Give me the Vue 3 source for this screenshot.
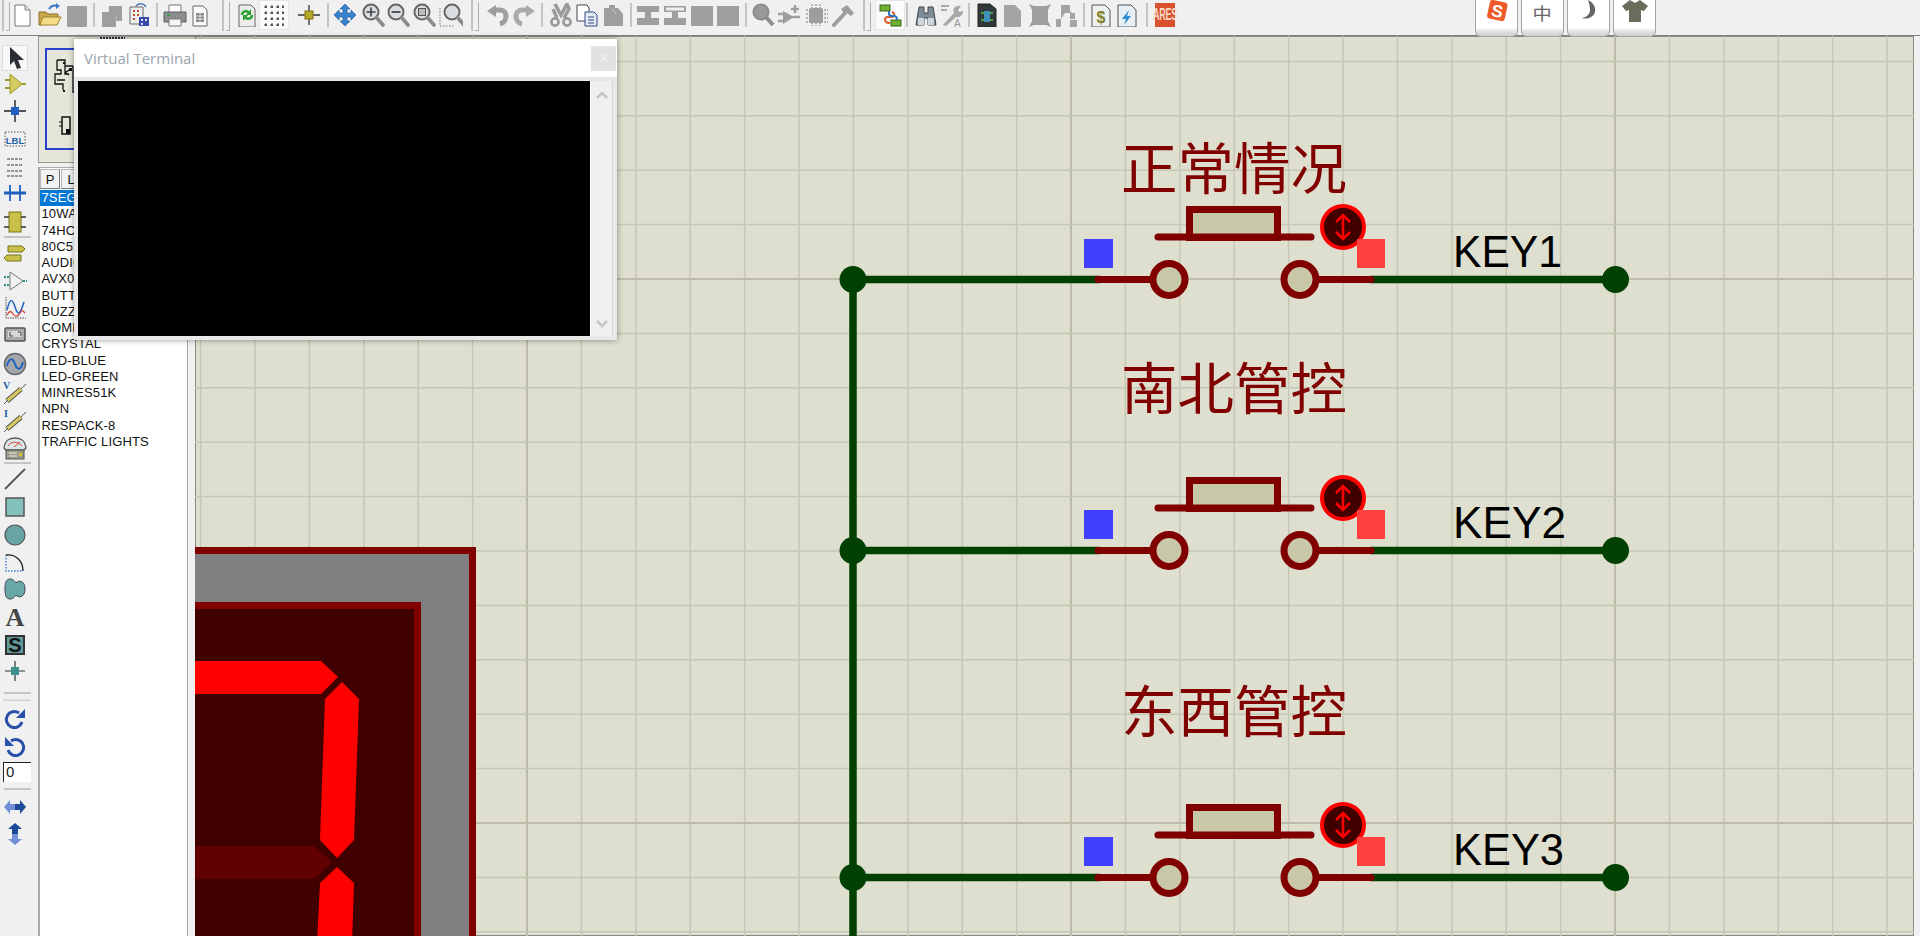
<template>
  <div class="app">
    <!-- icon sprite -->
    <svg class="sprite" aria-hidden="true">
      <defs>
        <symbol id="new" viewBox="0 0 24 24"><path d="M5 2h10l5 5v16H5z" fill="#fff" stroke="#777" /><path d="M15 2v5h5" fill="#ddd" stroke="#888" /></symbol>
        <symbol id="open" viewBox="0 0 24 24"><path d="M1 9h7l2 2h10v4H7l-3 7H1z" fill="#c8a848" stroke="#8a7030" /><path d="M5 14h18l-4 8H2z" fill="#f2dc88" stroke="#a08030" /><path d="M11 6c2-3 5-4 8-3" fill="none" stroke="#3a78c8" stroke-width="2" /><path d="M18 0l4 3-4 3z" fill="#3a78c8" /></symbol>
        <symbol id="save" viewBox="0 0 24 24"><rect x="2" y="3" width="20" height="21" rx="1" fill="#9e9e9e" /></symbol>
        <symbol id="pages" viewBox="0 0 24 24"><path d="M9 3h13v15h-6v6H2V9h7z" fill="#9e9e9e" /><path d="M9 9v-1M16 18v-5" stroke="#bbb" /></symbol>
        <symbol id="sheets" viewBox="0 0 24 24"><path d="M3 4h13v17H3z" fill="#eee" stroke="#666" /><path d="M6 8h2M10 8h2M6 12h2M10 12h2M6 16h2" stroke="#c05030" stroke-width="2" /><path d="M12 14h10v9H12z" fill="#3848a8" /><path d="M14 16h2v2h-2zM18 16h2v2h-2zM14 20h2v2h-2z" fill="#dde" /><path d="M9 3c3-3 8-3 10 1" fill="none" stroke="#4878b8" stroke-width="1.5" /></symbol>
        <symbol id="print" viewBox="0 0 24 24"><path d="M6 2h12v8H6z" fill="#fff" stroke="#777" /><path d="M1 9h22v10H1z" fill="#8c8f92" stroke="#5c5f62" /><path d="M6 16h12v7H6z" fill="#f6f6f6" stroke="#777" /><path d="M4 12h3" stroke="#38a048" stroke-width="2" /></symbol>
        <symbol id="sheet" viewBox="0 0 24 24"><path d="M5 3h10l4 4v16H5z" fill="#fafafa" stroke="#666" /><path d="M8 10h8v9H8z" fill="#888" /><path d="M8 13h8M8 16h8M12 10v9" stroke="#ddd" /></symbol>
        <symbol id="refresh" viewBox="0 0 24 24"><path d="M4 2h12l4 4v18H4z" fill="#ececec" stroke="#666" /><path d="M7 12c0-4 5-5 7-2" fill="none" stroke="#28a030" stroke-width="2.4" /><path d="M17 12c0 4-5 5-7 2" fill="none" stroke="#28a030" stroke-width="2.4" /><path d="M16 6v6h-5zM8 18v-6h5z" fill="#28a030" /></symbol>
        <symbol id="grid" viewBox="0 0 24 24"><path d="M2 4h20M2 10h20M2 16h20M2 22h20M4 2v22M10 2v22M16 2v22M21 2v22" stroke="#555" stroke-dasharray="1 5" stroke-width="1" /><path d="M3 4h2M9 4h2M15 4h2M20 4h2M3 10h2M9 10h2M15 10h2M20 10h2M3 16h2M9 16h2M15 16h2M20 16h2M3 22h2M9 22h2M15 22h2M20 22h2" stroke="#555" stroke-width="2" /></symbol>
        <symbol id="origin" viewBox="0 0 24 24"><path d="M12 2v20M1 12h22" stroke="#333" stroke-width="1.3" /><rect x="8" y="8" width="8" height="8" fill="#b8a828" stroke="#807018" /></symbol>
        <symbol id="pan" viewBox="0 0 24 24"><path d="M12 1l5 5h-3v4h4V7l5 5-5 5v-3h-4v4h3l-5 5-5-5h3v-4H6v3l-5-5 5-5v3h4V6H7z" fill="#3b82cc" stroke="#1c5ca0" stroke-width=".7" /></symbol>
        <g id="lens"><circle cx="10" cy="9" r="7.5" fill="#d8dee2" stroke="#666" stroke-width="2" /><path d="M15.5 14.5L22 22" stroke="#8a8a8a" stroke-width="3.6" stroke-linecap="round" /></g>
        <symbol id="zoomin" viewBox="0 0 24 24"><use href="#lens" /><path d="M5.5 9h9M10 4.5v9" stroke="#444" stroke-width="1.6" /></symbol>
        <symbol id="zoomout" viewBox="0 0 24 24"><use href="#lens" /><path d="M5.5 9h9" stroke="#444" stroke-width="1.8" /></symbol>
        <symbol id="zoomall" viewBox="0 0 24 24"><use href="#lens" /><rect x="6.5" y="5.5" width="7" height="7" fill="#bbb" stroke="#555" /></symbol>
        <symbol id="zoomarea" viewBox="0 0 24 24"><path d="M1 5v18h14" fill="none" stroke="#777" stroke-dasharray="1.5 1.5" /><g transform="translate(3 0)"><use href="#lens" /></g></symbol>
        <symbol id="undo" viewBox="0 0 24 24"><path d="M7 7h7c8 0 8 12 0 14" fill="none" stroke="#9e9e9e" stroke-width="5" /><path d="M1 8l9-6v12z" fill="#9e9e9e" /></symbol>
        <symbol id="redo" viewBox="0 0 24 24"><path d="M17 7h-7c-8 0-8 12 0 14" fill="none" stroke="#aaa" stroke-width="5" /><path d="M23 8l-9-6v12z" fill="#aaa" /></symbol>
        <symbol id="cut" viewBox="0 0 24 24"><path d="M6 1l6 11 6-11 2 5-5 9M8 15L4 6" fill="none" stroke="#9a9a9a" stroke-width="3.5" /><circle cx="6" cy="19" r="3.6" fill="none" stroke="#9a9a9a" stroke-width="2.6" /><circle cx="18" cy="19" r="3.6" fill="none" stroke="#9a9a9a" stroke-width="2.6" /></symbol>
        <symbol id="copy" viewBox="0 0 24 24"><path d="M2 2h10l2 3v13H2z" fill="#fff" stroke="#445" /><path d="M10 9h9l3 3v11H10z" fill="#e4eaf4" stroke="#334a80" /><path d="M13 14h6M13 17h6M13 20h6" stroke="#334a80" /></symbol>
        <symbol id="paste" viewBox="0 0 24 24"><path d="M3 5h5V2h6v3h3l5 6v12H3z" fill="#9e9e9e" /><path d="M11 6l4 5" stroke="#ccc" /></symbol>
        <symbol id="blockcopy" viewBox="0 0 24 24"><path d="M1 3h22v6h-8v6h8v7H1v-7h8V9H1z" fill="#9e9e9e" /></symbol>
        <symbol id="blockmove" viewBox="0 0 24 24"><path d="M1 3h22v6H15v6h8v7H1v-7h8V9H1z" fill="#9e9e9e" /><rect x="3" y="4.5" width="18" height="3" fill="#eee" /></symbol>
        <symbol id="blockfill" viewBox="0 0 24 24"><rect x="1" y="3" width="22" height="20" fill="#9e9e9e" /></symbol>
        <symbol id="pick" viewBox="0 0 24 24"><circle cx="10" cy="9" r="7.5" fill="#9a9a9a" stroke="#8c8c8c" stroke-width="2" /><path d="M15.5 14.5L22 22" stroke="#8c8c8c" stroke-width="4" /></symbol>
        <symbol id="make" viewBox="0 0 24 24"><path d="M5 8l11 6-11 7z" fill="#9e9e9e" /><path d="M0 11h7M0 18h7M15 14h7M17 2v8M13 6h8" stroke="#9e9e9e" stroke-width="2.5" /></symbol>
        <symbol id="pack" viewBox="0 0 24 24"><rect x="5" y="5" width="14" height="15" rx="2" fill="#9e9e9e" /><path d="M2 7h22M2 11h22M2 15h22M2 19h22M8 1v22M12 1v22M16 1v22" stroke="#9e9e9e" stroke-dasharray="2 1" stroke-width="1.5" /></symbol>
        <symbol id="hammer" viewBox="0 0 24 24"><path d="M3 22L15 9" stroke="#9e9e9e" stroke-width="4" stroke-linecap="round" /><path d="M10 6l6-4 7 8-3 3-4-3-2 2z" fill="#9e9e9e" /></symbol>
        <symbol id="netlist" viewBox="0 0 24 24"><rect x="2" y="2" width="10" height="6" fill="#70b030" stroke="#3a6a18" /><rect x="13" y="17" width="10" height="6" fill="#70b030" stroke="#3a6a18" /><path d="M14 9c3 1 3 4 0 5H9c-3 1-3 6 3 6" fill="none" stroke="#d86030" stroke-width="2" /><path d="M11 8v3c0 2 2 2 5 2s3 2 3 4" fill="none" stroke="#3070c0" stroke-width="2" /></symbol>
        <symbol id="find" viewBox="0 0 24 24"><path d="M5 4h5v6h4V4h5l3 18h-8v-7h-4v7H2z" fill="#7e8c98" stroke="#3e4650" stroke-width="1" /><path d="M4 15h6v7H4zM14 15h6v7h-6z" fill="#cfd6dc" /></symbol>
        <symbol id="tool" viewBox="0 0 24 24"><path d="M1 3h8M1 7h6" stroke="#aaa" stroke-width="2" /><path d="M3 22L14 10c-2-5 2-8 7-7l-3 4 1 2 4-1c0 5-4 7-7 6L6 23z" fill="#a8a8a8" /><text x="14" y="24" class="tiny" fill="#999">A</text></symbol>
        <symbol id="chipdoc" viewBox="0 0 24 24"><path d="M3 1h12l6 5v18H3z" fill="#30383a" stroke="#222" /><path d="M6 10h12M6 17h12" stroke="#58c040" stroke-width="1.6" /><rect x="9" y="8" width="6" height="11" fill="#4090b8" /></symbol>
        <symbol id="graydoc" viewBox="0 0 24 24"><path d="M4 2h11l6 6v16H4z" fill="#a4a4a4" /></symbol>
        <symbol id="scroll" viewBox="0 0 24 24"><path d="M1 1l5 2h12l5-2-3 6v11l3 6-5-2H6l-5 2 3-6V7z" fill="#9e9e9e" /></symbol>
        <symbol id="tree" viewBox="0 0 24 24"><path d="M6 2h9v6l2 2h3v6h-5V10H10l-4 6v8H1v-8h5zM15 17h7v7h-7z" fill="#a4a4a4" /></symbol>
        <symbol id="dollar" viewBox="0 0 24 24"><path d="M3 2h13l5 5v17H3z" fill="#eef0f0" stroke="#555" /><text x="12" y="20" text-anchor="middle" class="dollar" fill="#80802a">$</text></symbol>
        <symbol id="bolt" viewBox="0 0 24 24"><path d="M3 2h13l5 5v17H3z" fill="#e8eff4" stroke="#555" /><path d="M14 7l-7 9h4l-2 6 7-9h-4z" fill="#2c8cd8" /></symbol>
        <symbol id="ares" viewBox="0 0 24 24"><rect x="2" y="0" width="20" height="24" fill="#d8502c" /><text x="12" y="9" text-anchor="middle" class="ares" fill="#f6d8c8" transform="scale(1 1.9)">ARES</text></symbol>

        <symbol id="select" viewBox="0 0 24 24"><path d="M7 1v18l4-4 3 8 4-1-3-8h6z" fill="#2a2e34" /></symbol>
        <symbol id="comp" viewBox="0 0 24 24"><path d="M7 2l12 10L7 22z" fill="#d4cc60" stroke="#a09828" /><path d="M2 8h5M2 16h5M19 12h4" stroke="#a09828" stroke-width="2" /></symbol>
        <symbol id="junction" viewBox="0 0 24 24"><path d="M12 1v22M1 12h22" stroke="#222" stroke-width="1.4" /><rect x="8" y="8" width="8" height="8" fill="#2060c0" /></symbol>
        <symbol id="lbl" viewBox="0 0 24 24"><rect x="2" y="5" width="20" height="14" fill="none" stroke="#555" stroke-dasharray="1.5 1.5" /><text x="12" y="16.5" text-anchor="middle" class="lbl" fill="#2060a8">LBL</text></symbol>
        <symbol id="script" viewBox="0 0 24 24"><path d="M4 4h16M4 10h16M4 16h16M4 21h16" stroke="#777" stroke-width="1.6" stroke-dasharray="3 1" /></symbol>
        <symbol id="bus" viewBox="0 0 24 24"><path d="M1 11h22" stroke="#2060c0" stroke-width="3" /><path d="M7 3v16M17 3v16" stroke="#2060c0" stroke-width="1.8" /></symbol>
        <symbol id="sub" viewBox="0 0 24 24"><rect x="6" y="2" width="12" height="20" fill="#c8c048" stroke="#77721c" /><path d="M1 7h5M1 17h5M18 7h5M18 17h5" stroke="#333" stroke-width="1.4" /></symbol>
        <symbol id="term" viewBox="0 0 24 24"><path d="M5 4h14l3 3-3 3H5zM4 13h14v6H4l-3-3z" fill="#c8c048" stroke="#77721c" /></symbol>
        <symbol id="devpin" viewBox="0 0 24 24"><path d="M7 3l13 9L7 21z" fill="#f2f2f2" stroke="#777" /><path d="M1 8h5M1 16h5M20 12h4" stroke="#2a9090" stroke-width="1.8" stroke-dasharray="2 1" /></symbol>
        <symbol id="graph" viewBox="0 0 24 24"><path d="M3 1v21h20" fill="none" stroke="#555" stroke-dasharray="1.5 1" /><path d="M4 14c3-12 5-12 8-3s5 8 9-5" fill="none" stroke="#2060c0" stroke-width="1.5" /><path d="M4 19c3-5 4-4 6-1s5 3 7-1 3-2 5 0" fill="none" stroke="#d04030" stroke-width="1.3" /></symbol>
        <symbol id="tape" viewBox="0 0 24 24"><rect x="2" y="5" width="20" height="13" rx="1" fill="#aaa" stroke="#555" stroke-width="1.5" /><rect x="5" y="8" width="14" height="6" fill="#d8d8d8" /><path d="M7 9v4h3M15 9h3v4" fill="none" stroke="#444" /></symbol>
        <symbol id="gen" viewBox="0 0 24 24"><circle cx="12" cy="12" r="10.5" fill="#a4a8ac" stroke="#666" stroke-width="1.5" /><path d="M4 14c2-9 6-8 8-2s6 7 8-2" fill="none" stroke="#2060c0" stroke-width="2" /></symbol>
        <g id="probe"><path d="M4 21l14-12" stroke="#555" stroke-width="5" /><path d="M4 21l14-12" stroke="#d8c860" stroke-width="3" /><path d="M1 24l4-4M18 9c2-3 4-3 5-5" fill="none" stroke="#555" /></g>
        <symbol id="vprobe" viewBox="0 0 24 24"><use href="#probe" /><text x="0" y="9" class="probe" fill="#2060a8">V</text></symbol>
        <symbol id="iprobe" viewBox="0 0 24 24"><use href="#probe" /><text x="1" y="9" class="probe" fill="#2060a8">I</text></symbol>
        <symbol id="meter" viewBox="0 0 24 24"><path d="M1 12C2 4 6 2 12 2s10 2 11 10l-2 2H3z" fill="#dde6ea" stroke="#555" stroke-width="1.4" /><path d="M5 10c3-5 10-5 14 0" fill="none" stroke="#d04030" /><path d="M11 11l6-5" stroke="#d04030" /><rect x="3" y="14" width="18" height="9" fill="#9a9a88" stroke="#555" /><path d="M6 17h8M6 20h8" stroke="#eee" /><rect x="16" y="17" width="3" height="3" fill="#d8c030" /></symbol>
        <symbol id="line" viewBox="0 0 24 24"><path d="M2 22L22 2" stroke="#555" stroke-width="1.8" /></symbol>
        <symbol id="rect" viewBox="0 0 24 24"><rect x="3" y="3" width="18" height="18" fill="#84c0bc" stroke="#555" stroke-width="1.5" /></symbol>
        <symbol id="circle" viewBox="0 0 24 24"><circle cx="12" cy="12" r="10" fill="#68a4a4" stroke="#555" stroke-width="1.2" /></symbol>
        <symbol id="arc" viewBox="0 0 24 24"><path d="M3 5v16h17" fill="none" stroke="#3c78d0" stroke-dasharray="1.5 1.5" stroke-width="1.4" /><path d="M3 5c9-1 17 5 17 16" fill="none" stroke="#222" stroke-width="1.3" /></symbol>
        <symbol id="path" viewBox="0 0 24 24"><path d="M7 2c4 0 5 3 6 4 2-3 9-3 9 6s-7 9-9 6c-1 1-2 4-6 4S2 18 2 12 3 2 7 2z" fill="#68a8a8" stroke="#445" /></symbol>
        <symbol id="textA" viewBox="0 0 24 24"><text x="12" y="21" text-anchor="middle" class="bigA" fill="#444">A</text></symbol>
        <symbol id="symb" viewBox="0 0 24 24"><rect x="3" y="3" width="18" height="18" fill="#5f9a9a" stroke="#333" stroke-width="2" /><text x="12" y="18.5" text-anchor="middle" class="symS" fill="#111">S</text></symbol>
        <symbol id="marker" viewBox="0 0 24 24"><path d="M12 2v20M2 12h20" stroke="#333" stroke-width="1.2" /><rect x="8" y="8" width="8" height="8" fill="#3c9090" /></symbol>
        <symbol id="cw" viewBox="0 0 24 24"><path d="M19 15a8 8 0 1 1-3-9" fill="none" stroke="#2850a8" stroke-width="3" /><path d="M22 2v9h-9z" fill="#2850a8" /></symbol>
        <symbol id="ccw" viewBox="0 0 24 24"><path d="M5 15a8 8 0 1 0 3-9" fill="none" stroke="#2850a8" stroke-width="3" /><path d="M2 2v9h9z" fill="#2850a8" /></symbol>
        <symbol id="fliph" viewBox="0 0 24 24"><path d="M12 9H7V5l-6 7 6 7v-4h5z" fill="#7090d8" /><path d="M12 9h5V5l6 7-6 7v-4h-5z" fill="#1e4898" /></symbol>
        <symbol id="flipv" viewBox="0 0 24 24"><path d="M9 12V7H5l7-6 7 6h-4v5z" fill="#1e4898" /><path d="M9 12v5H5l7 6 7-6h-4v-5z" fill="#7090d8" /></symbol>
      </defs>
    </svg>

    <header class="toolbar">
      <template v-for="t in topItems" :key="t.at">
        <i v-if="t.id === '|'" class="sep" :style="{ marginLeft: t.gap + 'px' }"></i>
        <i v-else-if="t.id === 'grip'" class="grip" :style="{ marginLeft: t.gap + 'px' }"></i>
        <span v-else class="tool" :class="{ on: t.on }" :style="{ marginLeft: t.gap + 'px' }">
          <svg width="24" height="24"><use :href="'#' + t.id" /></svg>
        </span>
      </template>
    </header>

    <!-- input method skin sits over the toolbar -->
    <div class="ime">
      <div class="key">
        <svg width="24" height="24" viewBox="0 0 24 24"><rect x="3" y="1" width="18" height="19" rx="3" fill="#ee5a28" transform="rotate(12 12 12)" /><text x="12" y="17" text-anchor="middle" class="imeS" fill="#fff" transform="rotate(12 12 12)">S</text></svg>
      </div>
      <div class="key"><span class="zh">中</span></div>
      <div class="key">
        <svg width="24" height="24" viewBox="0 0 24 24"><path d="M11 0c6 3 8 8 7 12s-6 8-13 6c5-1 8-4 8-8s-1-7-2-10z" fill="#666" /></svg>
      </div>
      <div class="key">
        <svg width="26" height="24" viewBox="0 0 26 24"><path d="M8 0l5 3 5-3 8 6-4 5-3-1v12H7V10l-3 1-4-5z" fill="#6c6c5c" /></svg>
      </div>
    </div>

    <div class="body">
      <aside class="strip">
        <template v-for="s in sideItems" :key="s.at">
          <i v-if="s.id === '|'" class="rule" :style="{ marginTop: s.gap + 'px' }"></i>
          <i v-else-if="s.id === 'grip'" class="bar" :style="{ marginTop: s.gap + 'px' }"></i>
          <div v-else-if="s.id === 'input'" class="angle" :style="{ marginTop: s.gap + 'px' }">0</div>
          <span v-else class="side" :class="{ on: s.on }" :style="{ marginTop: s.gap + 'px' }">
            <svg width="24" height="24"><use :href="'#' + s.id" /></svg>
          </span>
        </template>
      </aside>

      <section class="panel">
        <div class="overview">
          <div class="sheet">
            <svg width="30" height="84" viewBox="0 0 30 84">
              <path d="M6 6h8v6h8M6 6v10h4v4H4v10h8v6M14 12v8h4M18 16l-4 3 4 2M22 12v26h8M6 26h8" fill="none" stroke="#111" stroke-width="1.3" />
              <path d="M12 8h2v2h-2zM18 14h3v3h-3zM12 36h2v2h-2z" fill="#111" />
              <rect x="11" y="63" width="8" height="17" fill="none" stroke="#111" stroke-width="1.5" />
              <rect x="15" y="75" width="4" height="5" fill="#111" />
              <path d="M8 68h3M8 72h3" stroke="#111" />
            </svg>
          </div>
        </div>
        <div class="parts">
          <div class="tabs">
            <button class="tab">P</button>
            <button class="tab">L</button>
          </div>
          <div class="list">
            <div v-for="(p, i) in parts" :key="p" class="part" :class="{ sel: i === 0 }">{{ p }}</div>
          </div>
        </div>
      </section>

      <main class="canvas">
        <svg class="sheet-svg" width="1719" height="900" viewBox="195 36 1719 900">
          <path v-for="l in gridLines" :key="l.d" :d="l.d" :class="l.major ? 'major' : 'minor'" />

          <!-- seven segment display, only its top right corner is on screen -->
          <rect x="150" y="550.5" width="322.5" height="500" fill="#808080" stroke="#800000" stroke-width="7" />
          <rect x="150" y="605.5" width="267.5" height="500" fill="#400000" stroke="#800000" stroke-width="7" />
          <path d="M190 661h131l17 16-17 17H190z" fill="#ff0000" />
          <path d="M342 682l17 17-5 141-17 18-17-18 5-141z" fill="#ff0000" />
          <path d="M190 846h124l18 16-18 17H190z" fill="#600000" />
          <path d="M337 867l17 16-2 60h-35l3-60z" fill="#ff0000" />

          <path d="M853 279.5V936" class="wire" />
          <g v-for="k in keys" :key="k.name" :transform="`translate(0 ${k.dy})`">
            <path d="M853 279.5H1100M1370 279.5H1615" class="wire" />
            <circle cx="853" cy="279.5" r="13.5" fill="#004000" />
            <circle cx="1615.5" cy="279.5" r="13.5" fill="#004000" />

            <text x="1121" :y="k.labelY" class="zh-label" textLength="226" lengthAdjust="spacingAndGlyphs">{{ k.label }}</text>
            <text x="1453" y="267" class="key-label" :textLength="k.nameWidth" lengthAdjust="spacingAndGlyphs">{{ k.name }}</text>

            <path d="M1098 279.5H1150M1319 279.5H1371" class="pin" stroke-linecap="round" />
            <circle cx="1169" cy="279.5" r="16" class="contact" />
            <circle cx="1300" cy="279.5" r="16" class="contact" />
            <rect x="1189.5" y="209.5" width="88" height="28" class="contact" />
            <path d="M1158 237H1311" class="pin" stroke-linecap="round" />

            <circle cx="1343" cy="227" r="21" fill="#400000" stroke="#ff0000" stroke-width="4" />
            <path d="M1343 216V238M1336 222l7-7 7 7M1336 232l7 7 7-7" fill="none" stroke="#ff0000" stroke-width="2.5" />
            <rect x="1084" y="239" width="29" height="29" fill="#4040ff" />
            <rect x="1357" y="239" width="28" height="29" fill="#ff4040" />
          </g>
        </svg>

        <!-- floating terminal window -->
        <div class="terminal">
          <div class="term-title">
            <span>Virtual Terminal</span>
            <span class="term-close">×</span>
          </div>
          <div class="term-body">
            <div class="term-screen"></div>
            <div class="term-scroll">
              <svg width="14" height="10" viewBox="0 0 14 10"><path d="M2 8l5-5 5 5" fill="none" stroke="#c4c4c4" stroke-width="2.5" /></svg>
              <svg width="14" height="10" viewBox="0 0 14 10"><path d="M2 2l5 5 5-5" fill="none" stroke="#c4c4c4" stroke-width="2.5" /></svg>
            </div>
          </div>
        </div>
      </main>
    </div>
  </div>
</template>

<script setup>
const SIZES = { '|': 2, grip: 8, input: 20 }
const SIDE_SIZES = { '|': 2, grip: 3, input: 20 }

// turn a list of [id, centre, on] into flow items with the gap before each one
function flow(list, sizes) {
  let end = 0
  return list.map(([id, at, on]) => {
    const size = sizes[id] || 24
    const gap = at - size / 2 - end
    end = at + size / 2
    return { id, at, on, gap }
  })
}

const topItems = flow([
  ['grip', 6], ['new', 22], ['open', 50], ['save', 77], ['|', 94], ['pages', 112], ['sheets', 139], ['|', 157],
  ['print', 175], ['sheet', 200], ['grip', 226], ['refresh', 247], ['grid', 274, true], ['origin', 309], ['|', 328],
  ['pan', 345], ['zoomin', 373], ['zoomout', 398], ['zoomall', 424], ['zoomarea', 451], ['grip', 475],
  ['undo', 498], ['redo', 524], ['|', 541.5], ['cut', 561], ['copy', 587], ['paste', 613], ['|', 631],
  ['blockcopy', 648], ['blockmove', 675], ['blockfill', 702], ['blockfill', 728], ['|', 746],
  ['pick', 763], ['make', 790], ['pack', 816], ['hammer', 843], ['grip', 867], ['netlist', 890, true], ['|', 907],
  ['find', 926], ['tool', 952], ['|', 969], ['chipdoc', 987], ['graydoc', 1012], ['scroll', 1040], ['tree', 1067], ['|', 1084],
  ['dollar', 1101], ['bolt', 1127], ['|', 1147], ['ares', 1165]
], SIZES)

const sideItems = flow([
  ['select', 22, true], ['comp', 48], ['junction', 75], ['lbl', 103], ['script', 131], ['bus', 158], ['sub', 186],
  ['|', 201], ['term', 218], ['devpin', 245], ['graph', 272], ['tape', 299], ['gen', 328], ['vprobe', 356], ['iprobe', 384], ['meter', 412],
  ['|', 427], ['line', 443], ['rect', 471], ['circle', 499], ['arc', 526], ['path', 553], ['textA', 581], ['symb', 609], ['marker', 635],
  ['|', 657], ['grip', 663], ['cw', 683], ['ccw', 711], ['input', 736], ['|', 753], ['fliph', 771], ['flipv', 798]
], SIDE_SIZES)

const parts = [
  '7SEG-BCD', '10WATT1K', '74HC595', '80C51', 'AUDIO-JACK', 'AVX0402', 'BUTTON', 'BUZZER', 'COMPIM', 'CRYSTAL',
  'LED-BLUE', 'LED-GREEN', 'MINRES51K', 'NPN', 'RESPACK-8', 'TRAFFIC LIGHTS'
]

const keys = [
  { name: 'KEY1', label: '正常情况', dy: 0, labelY: 189, nameWidth: 109 },
  { name: 'KEY2', label: '南北管控', dy: 271, labelY: 138, nameWidth: 113 },
  { name: 'KEY3', label: '东西管控', dy: 598, labelY: 134, nameWidth: 111 }
]

// grid pitch is 54.4px, every tenth line is heavier
const gridLines = []
for (let n = -27; n <= 6; n++) {
  const x = 1615 + n * 54.4
  gridLines.push({ d: `M${x} 36V936`, major: n % 10 === 0 })
}
for (let n = -5; n <= 13; n++) {
  const y = 279 + n * 54.4
  gridLines.push({ d: `M195 ${y}H1914`, major: n % 10 === 0 })
}
</script>

<style scoped>
.app {
  position: relative;
  width: 1920px;
  height: 936px;
  overflow: hidden;
  background: #f0f0f0;
  font-family: "Liberation Sans", Arial, sans-serif;
}

.sprite {
  position: absolute;
  width: 0;
  height: 0;
}

.tiny { font: 10px "Liberation Sans", sans-serif; }
.dollar { font: bold 16px "Liberation Sans", sans-serif; }
.ares { font: bold 9px "Liberation Sans", sans-serif; letter-spacing: -0.3px; }
.lbl { font: bold 9.5px "Liberation Sans", sans-serif; }
.probe { font: bold 10px "Liberation Serif", serif; }
.bigA { font: bold 26px "Liberation Serif", serif; }
.symS { font: bold 20px "Liberation Sans", sans-serif; }
.imeS { font: bold 17px "Liberation Sans", sans-serif; }

.toolbar {
  display: flex;
  align-items: flex-start;
  height: 36px;
  padding-top: 3px;
  box-sizing: border-box;
  background: #f0f0f0;
  border-bottom: 1px solid #808080;
}

.tool {
  display: block;
  flex: none;
  width: 24px;
  height: 24px;
}

.tool.on {
  background: #fbfbfb;
  box-shadow: 0 0 0 2px #fbfbfb, 0 0 0 3px #e6e6e6;
}

.sep {
  flex: none;
  width: 2px;
  height: 24px;
  background: #c4c4c4;
}

.grip {
  position: relative;
  flex: none;
  box-sizing: border-box;
  width: 8px;
  height: 31px;
  margin-top: -3px;
  border-left: 2px solid #c2c2c2;
}

.grip::after {
  content: "";
  position: absolute;
  right: 0;
  bottom: 0;
  width: 3px;
  height: 28px;
  border-right: 1px solid #b0b0b0;
  border-bottom: 1px solid #b0b0b0;
}

.ime {
  position: absolute;
  top: 0;
  left: 1475px;
  z-index: 3;
  display: flex;
  gap: 3px;
}

.key {
  display: flex;
  justify-content: center;
  box-sizing: border-box;
  width: 43px;
  height: 37px;
  border: 1px solid #a4a4a4;
  border-top: 0;
  border-radius: 0 0 6px 6px;
  background: linear-gradient(#fff 0, #fff 28px, #e4e4e4 31px, #cfcfcf 100%);
}

.zh {
  font-family: "Noto Sans CJK SC", sans-serif;
  font-size: 16px;
  line-height: 24px;
  height: 24px;
  color: #666;
  transform: scale(1.2, 1.05);
  transform-origin: 50% 0;
}

.body {
  display: flex;
  height: 900px;
}

.strip {
  flex: none;
  display: flex;
  flex-direction: column;
  align-items: flex-start;
  width: 38px;
  box-sizing: border-box;
  padding-left: 3px;
  background: #f0f0f0;
}

.side {
  display: block;
  flex: none;
  width: 24px;
  height: 24px;
}

.side.on {
  background: #f8f8f8;
  box-shadow: 0 0 0 1px #dcdcdc;
}

.rule {
  flex: none;
  width: 27px;
  height: 2px;
  margin-left: 1px;
  background: #c4c4c4;
}

.bar {
  flex: none;
  width: 28px;
  height: 3px;
  background: linear-gradient(#f8f8f8, #c8c8c8);
}

.angle {
  flex: none;
  box-sizing: border-box;
  width: 28px;
  height: 20px;
  padding-left: 2px;
  border-top: 1px solid #222;
  border-left: 1px solid #222;
  background: #fff;
  font-family: "Liberation Sans", sans-serif;
  font-size: 15px;
  line-height: 18px;
  color: #222;
}

.panel {
  flex: none;
  display: flex;
  flex-direction: column;
  width: 157px;
}

.overview {
  position: relative;
  flex: none;
  height: 127px;
  box-sizing: border-box;
  padding: 11px 7px 0 6px;
  background: #e6e6d8;
  border-top: 1px solid #999;
  border-left: 1px solid #999;
  border-bottom: 1px solid #999;
}

/* sliver of the overview drawing poking out above the terminal window */
.overview::before {
  content: "";
  position: absolute;
  top: 0;
  left: 61px;
  width: 25px;
  height: 2px;
  background: repeating-linear-gradient(90deg, #333 0 2px, transparent 2px 3px);
}

.sheet {
  box-sizing: border-box;
  height: 102px;
  padding: 4px 0 0 4px;
  border: 2px solid #2a40d0;
  background: #e6e6d8;
}

.parts {
  flex: 1;
  display: flex;
  flex-direction: column;
  margin-top: 4px;
  border-top: 1px solid #aaa;
  border-left: 2px solid #a8a8a8;
  background: #fff;
  box-shadow: inset -7px 0 0 #f0f0f0, inset -8px 0 0 #aaa;
}

.tabs {
  display: flex;
  gap: 1px;
  height: 21px;
  padding-top: 1px;
  box-sizing: border-box;
}

.tab {
  box-sizing: border-box;
  width: 20px;
  height: 20px;
  padding: 0;
  border: 1px solid #b8b8b8;
  border-right-color: #777;
  border-bottom-color: #777;
  background: #f2f2f2;
  font-family: "Liberation Sans", sans-serif;
  font-size: 13px;
  color: #111;
}

.list {
  padding-top: 1px;
}

.part {
  height: 16.25px;
  padding-left: 1.5px;
  font-size: 13px;
  line-height: 16px;
  letter-spacing: 0.13px;
  color: #111;
  white-space: nowrap;
}

.part.sel {
  background: #0078d7;
  color: #fff;
  margin-right: 8px;
}

.canvas {
  flex: none;
  width: 1719px;
  height: 900px;
  background: #dfdfcf;
  box-shadow: inset 0 0 0 1px #888;
}

.sheet-svg {
  display: block;
}

.minor {
  stroke: #c6c6b4;
  stroke-width: 1.5;
  fill: none;
}

.major {
  stroke: #bcbca8;
  stroke-width: 2;
  fill: none;
}

.wire {
  stroke: #004000;
  stroke-width: 7.5;
  fill: none;
}

.pin {
  stroke: #800000;
  stroke-width: 7;
  fill: none;
}

.contact {
  fill: #c8c8a8;
  stroke: #800000;
  stroke-width: 7;
}

.zh-label {
  font-family: "Noto Sans CJK SC", sans-serif;
  font-size: 56px;
  fill: #800000;
}

.key-label {
  font-family: "Liberation Sans", sans-serif;
  font-size: 44px;
  fill: #000;
}

.terminal {
  position: absolute;
  top: 39px;
  left: 74px;
  z-index: 2;
  display: flex;
  flex-direction: column;
  width: 543px;
  height: 301px;
  background: #e8e8e8;
  box-shadow: 0 0 6px rgba(0, 0, 0, 0.4);
}

.term-title {
  flex: none;
  display: flex;
  align-items: center;
  justify-content: space-between;
  height: 38px;
  padding: 0 1px 0 10px;
  background: #fff;
  font-family: "Open Sans", sans-serif;
  font-size: 15px;
  color: #9aa4ae;
}

.term-close {
  display: flex;
  align-items: center;
  justify-content: center;
  width: 25px;
  height: 25px;
  background: #e2e2e2;
  color: #f4f4f4;
  font-size: 16px;
}

.term-body {
  flex: 1;
  display: flex;
  margin: 4px;
  box-shadow: inset 0 1px 0 #555;
}

.term-screen {
  flex: 1;
  background: #000;
}

.term-scroll {
  flex: none;
  display: flex;
  flex-direction: column;
  align-items: center;
  justify-content: space-between;
  box-sizing: border-box;
  width: 23px;
  padding: 9px 0 7px;
  background: #efefef;
  border-left: 1px solid #fff;
  border-right: 1px solid #d8d8d8;
}
</style>
<style>
html, body {
  margin: 0;
  background: #f0f0f0;
}
</style>
